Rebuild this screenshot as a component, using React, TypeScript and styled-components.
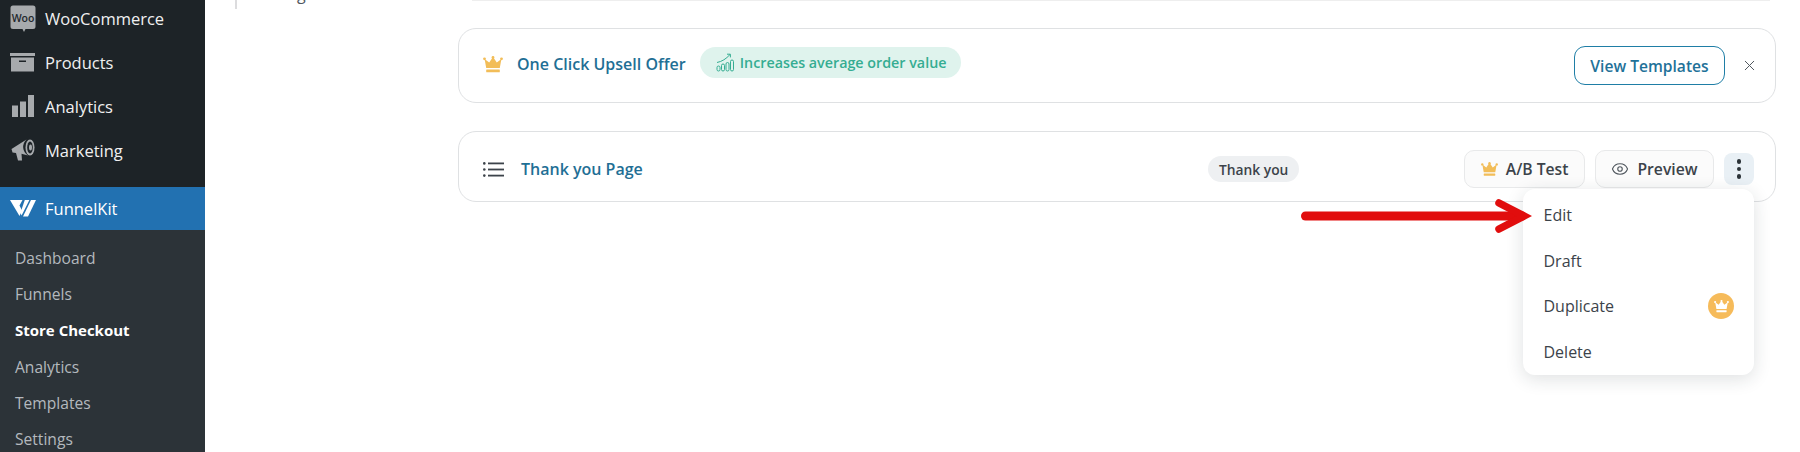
import React from "react";
import styled, { createGlobalStyle } from "styled-components";
import { Eye, X } from "lucide-react";

const GlobalStyle = createGlobalStyle`
	html, body {
		margin: 0;
		padding: 0;
		background: #ffffff;
	}
	body {
		font-family: "Open Sans", "Noto Sans", sans-serif;
	}
`;

const CrownIcon = ({ size = 20, color = "#f2bd58" }: { size?: number; color?: string }) => (
	<svg width={size} height={size * 0.85} viewBox="0 0 20 17" fill={color}>
		<path d="M10 1 L13.8 6.4 L18.4 3 L16.8 12 H3.2 L1.6 3 L6.2 6.4 Z" />
		<circle cx="10" cy="1.4" r="1.4" />
		<circle cx="1.5" cy="2.8" r="1.4" />
		<circle cx="18.5" cy="2.8" r="1.4" />
		<rect x="3.2" y="13.6" width="13.6" height="2.6" rx="0.5" />
	</svg>
);

const WooIcon = () => (
	<svg width="26" height="27" viewBox="0 0 26 27">
		<path d="M3 0.5 H23 A2.5 2.5 0 0 1 25.5 3 V21.5 A2.5 2.5 0 0 1 23 24 H15.5 L14 27 L12.5 24 H3 A2.5 2.5 0 0 1 0.5 21.5 V3 A2.5 2.5 0 0 1 3 0.5 Z" fill="#a7aaad" />
		<text x="13" y="16.5" textAnchor="middle" fontSize="10.5" fontWeight="600" fill="#23282d" fontFamily="Open Sans, sans-serif">Woo</text>
	</svg>
);

const ProductsIcon = () => (
	<svg width="25" height="19" viewBox="0 0 25 19" fill="#a7aaad">
		<rect x="0" y="0" width="25" height="3" />
		<path d="M1 4.5 H24 V18.5 H1 Z M9 7.5 V9 H16 V7.5 Z" fillRule="evenodd" />
	</svg>
);

const BarsIcon = () => (
	<svg width="22" height="22" viewBox="0 0 22 22" fill="#a7aaad">
		<rect x="0" y="10.5" width="6" height="11.5" />
		<rect x="8" y="6.5" width="6" height="15.5" />
		<rect x="16" y="0" width="6" height="22" />
	</svg>
);

const MegaphoneIcon = () => (
	<svg width="24" height="24" viewBox="0 0 24 24" fill="#a7aaad">
		<path d="M0.5 11 L15.5 1.5 A10 10 0 0 0 17 17.5 L10.5 15.8 L11 22.5 H7 L5 15 L1.5 14.5 Z" />
		<ellipse cx="19" cy="9.5" rx="4.5" ry="8" />
		<ellipse cx="19" cy="9.5" rx="2.8" ry="6" fill="#1d2327" />
		<ellipse cx="19.5" cy="9.5" rx="1.5" ry="3" />
	</svg>
);

const FunnelKitIcon = () => (
	<svg width="26" height="17" viewBox="0 0 26 17" fill="#ffffff">
		<path d="M0 0 H12.5 L9.5 5.5 L12 10.5 L9.5 16 Z" />
		<path d="M14.2 0 H18.8 L11 15.5 L9.8 13 Z" transform="translate(0.6 0)" />
		<path d="M21 0 H26 L18 16.5 H13 Z" />
	</svg>
);

const GrowthIcon = () => (
	<svg width="19" height="19" viewBox="0 0 19 19" fill="none" stroke="#35ad92" strokeWidth="1">
		<rect x="1" y="13" width="3" height="5" rx="1.5" />
		<rect x="5.5" y="11" width="3" height="7" rx="1.5" />
		<rect x="10" y="9.5" width="3" height="8.5" rx="1.5" />
		<rect x="14.5" y="7" width="3" height="11" rx="1.5" />
		<path d="M1 9.5 C6 8.5 10 6 14 1.5 M11 1.2 H14.4 V4.4" />
	</svg>
);

const ListIcon = () => (
	<svg width="21" height="15" viewBox="0 0 21 15" fill="#3c434a">
		<circle cx="1.3" cy="1.4" r="1.3" />
		<circle cx="1.3" cy="7.5" r="1.3" />
		<circle cx="1.3" cy="13.6" r="1.3" />
		<rect x="5" y="0.5" width="16" height="1.8" />
		<rect x="5" y="6.6" width="16" height="1.8" />
		<rect x="5" y="12.7" width="16" height="1.8" />
	</svg>
);

const RedArrow = () => (
	<ArrowGraphic width="232" height="34" viewBox="0 0 232 34">
		<path d="M5.5 17 H222" stroke="#e10d0d" strokeWidth="9" strokeLinecap="round" />
		<path d="M199 4 L224 17 L199 30" fill="none" stroke="#e10d0d" strokeWidth="7.5" strokeLinecap="round" strokeLinejoin="miter" />
	</ArrowGraphic>
);

const App = () => {
	return (
		<Page>
			<GlobalStyle />
			<Sidebar>
				<TopMenu>
					<TopItem>
						<IconSlot><WooIcon /></IconSlot>WooCommerce
					</TopItem>
					<TopItem>
						<IconSlot><ProductsIcon /></IconSlot>Products
					</TopItem>
					<TopItem>
						<IconSlot><BarsIcon /></IconSlot>Analytics
					</TopItem>
					<TopItem>
						<IconSlot><MegaphoneIcon /></IconSlot>Marketing
					</TopItem>
				</TopMenu>
				<ActiveItem>
					<IconSlot><FunnelKitIcon /></IconSlot>FunnelKit
				</ActiveItem>
				<SubMenu>
					<SubItem>Dashboard</SubItem>
					<SubItem>Funnels</SubItem>
					<SubItem $current>Store Checkout</SubItem>
					<SubItem>Analytics</SubItem>
					<SubItem>Templates</SubItem>
					<SubItem>Settings</SubItem>
				</SubMenu>
			</Sidebar>
			<Main>
				<Rail>
					<RailStub />
					<RailLabel>g</RailLabel>
				</Rail>
				<Content>
					<TopRule />
					<OfferCard>
						<OfferCrown>
							<CrownIcon />
						</OfferCrown>
						<OfferTitle>One Click Upsell Offer</OfferTitle>
						<GreenPill>
							<GrowthIcon />
							Increases average order value
						</GreenPill>
						<OfferActions>
							<OutlineButton>View Templates</OutlineButton>
							<CloseButton>
								<X size={17} strokeWidth={1.4} />
							</CloseButton>
						</OfferActions>
					</OfferCard>
					<StepCard>
						<StepLead>
							<ListIcon />
							<StepTitle>Thank you Page</StepTitle>
						</StepLead>
						<TypeChip>Thank you</TypeChip>
						<StepActions>
							<GhostButton>
								<CrownIcon size={17} />
								A/B Test
							</GhostButton>
							<GhostButton>
								<Eye size={18} strokeWidth={1.5} color="#50575e" />
								Preview
							</GhostButton>
							<KebabWrap>
								<KebabButton>
									<Dot />
									<Dot />
									<Dot />
								</KebabButton>
								<Dropdown>
									<RedArrow />
									<DropdownItem>Edit</DropdownItem>
									<DropdownItem>Draft</DropdownItem>
									<DropdownItem>
										Duplicate
										<CrownBadge>
											<CrownIcon size={15} color="#ffffff" />
										</CrownBadge>
									</DropdownItem>
									<DropdownItem>Delete</DropdownItem>
								</Dropdown>
							</KebabWrap>
						</StepActions>
					</StepCard>
				</Content>
			</Main>
		</Page>
	);
};

const Page = styled.div`
	display: flex;
	width: 1800px;
	height: 452px;
	overflow: hidden;
	background: #ffffff;
`;
const Sidebar = styled.aside`
	flex: 0 0 205px;
	display: flex;
	flex-direction: column;
	background: #1d2327;
	overflow: hidden;
`;
const TopMenu = styled.div`
	flex: none;
	display: flex;
	flex-direction: column;
	margin-top: -4px;
	padding-bottom: 15px;
`;
const TopItem = styled.div`
	flex: none;
	display: flex;
	align-items: center;
	height: 44px;
	font-size: 16.5px;
	color: #f0f0f1;
`;
const IconSlot = styled.span`
	flex: 0 0 45px;
	display: flex;
	align-items: center;
	justify-content: center;
`;
const ActiveItem = styled(TopItem)`
	height: 43px;
	background: #2271b1;
	color: #ffffff;
`;
const SubMenu = styled.div`
	flex: 1;
	min-height: 0;
	display: flex;
	flex-direction: column;
	padding-top: 10px;
	background: #2c3338;
`;
const SubItem = styled.div<{ $current?: boolean }>`
	flex: none;
	height: 36.2px;
	line-height: 36.2px;
	padding-left: 15px;
	font-size: ${(p) => (p.$current ? "15px" : "15.6px")};
	font-weight: ${(p) => (p.$current ? 700 : 400)};
	color: ${(p) => (p.$current ? "#ffffff" : "#b4b9be")};
`;
const Main = styled.main`
	flex: 1;
	display: grid;
	grid-template-columns: 253px 1fr;
	padding-right: 24px;
`;
const Rail = styled.div`
	display: flex;
	align-items: flex-start;
	padding-left: 30px;
`;
const RailStub = styled.div`
	width: 2px;
	height: 9px;
	background: #dcdcde;
`;
const RailLabel = styled.span`
	margin: -17px 0 0 60px;
	font-size: 16px;
	color: #50575e;
`;
const Content = styled.div`
	display: flex;
	flex-direction: column;
`;
const TopRule = styled.div`
	height: 1px;
	margin: 0 6px 27px 14px;
	background: #eeeeee;
`;
const Card = styled.section`
	display: flex;
	align-items: center;
	box-sizing: border-box;
	padding-left: 24px;
	border: 1px solid #dfe1e3;
	border-radius: 18px;
	background: #ffffff;
`;
const OfferCard = styled(Card)`
	height: 75px;
	margin-bottom: 28px;
`;
const OfferCrown = styled.span`
	display: flex;
	margin-bottom: 3px;
`;
const OfferTitle = styled.span`
	margin: 0 0 3px 14px;
	font-size: 16px;
	font-weight: 600;
	color: #1f6f95;
`;
const GreenPill = styled.span`
	display: flex;
	align-items: center;
	gap: 5px;
	height: 31px;
	margin: 0 0 6px 14px;
	padding: 0 15px 0 16px;
	border-radius: 16px;
	background: #dff3ed;
	font-size: 14.3px;
	font-weight: 600;
	color: #35ad92;
`;
const OfferActions = styled.div`
	display: flex;
	align-items: center;
	margin-left: auto;
	margin-right: 17px;
	gap: 16px;
`;
const OutlineButton = styled.button`
	width: 151px;
	height: 39px;
	border: 1.5px solid #1f7ea6;
	border-radius: 11px;
	background: #ffffff;
	font-family: inherit;
	font-size: 15.6px;
	font-weight: 600;
	color: #1f7299;
`;
const CloseButton = styled.button`
	display: flex;
	padding: 0;
	border: 0;
	background: none;
	color: #50575e;
`;
const StepCard = styled(Card)`
	height: 71px;
	padding-top: 5px;
`;
const StepLead = styled.div`
	flex: 0 0 725px;
	display: flex;
	align-items: center;
	gap: 17px;
`;
const StepTitle = styled.span`
	font-size: 16px;
	font-weight: 600;
	color: #1f6f95;
`;
const TypeChip = styled.span`
	display: flex;
	align-items: center;
	height: 26px;
	padding: 0 11px;
	border-radius: 13px;
	background: #eef0f2;
	font-size: 13.8px;
	font-weight: 600;
	color: #3c434a;
`;
const StepActions = styled.div`
	display: flex;
	align-items: center;
	gap: 10px;
	margin-left: auto;
	margin-right: 21px;
`;
const GhostButton = styled.button`
	display: flex;
	align-items: center;
	justify-content: center;
	gap: 8px;
	height: 38px;
	padding: 0 15.5px;
	border: 1px solid #e8e9ea;
	border-radius: 10px;
	background: #fbfbfb;
	font-family: inherit;
	font-size: 15.7px;
	font-weight: 600;
	color: #3c434a;
`;
const KebabWrap = styled.div`
	position: relative;
`;
const KebabButton = styled.button`
	display: flex;
	flex-direction: column;
	align-items: center;
	justify-content: center;
	gap: 3px;
	width: 30px;
	height: 32px;
	padding: 0;
	border: 0;
	border-radius: 8px;
	background: #e9f0f5;
`;
const Dot = styled.span`
	width: 4.5px;
	height: 4.5px;
	border-radius: 50%;
	background: #2c3338;
`;
const Dropdown = styled.div`
	position: absolute;
	top: 36px;
	right: 0;
	display: flex;
	flex-direction: column;
	width: 231px;
	height: 186px;
	padding-top: 3px;
	box-sizing: border-box;
	border-radius: 12px;
	background: #ffffff;
	box-shadow: 0 4px 18px rgba(30, 40, 50, 0.14);
`;
const ArrowGraphic = styled.svg`
	position: absolute;
	top: 10px;
	left: -223px;
`;
const DropdownItem = styled.div`
	flex: 1;
	display: flex;
	align-items: center;
	justify-content: space-between;
	padding: 0 20px 0 20.5px;
	font-size: 16px;
	color: #3c434a;
`;
const CrownBadge = styled.span`
	display: flex;
	align-items: center;
	justify-content: center;
	width: 26px;
	height: 26px;
	border-radius: 50%;
	background: #f6bb5a;
`;

export default App;
